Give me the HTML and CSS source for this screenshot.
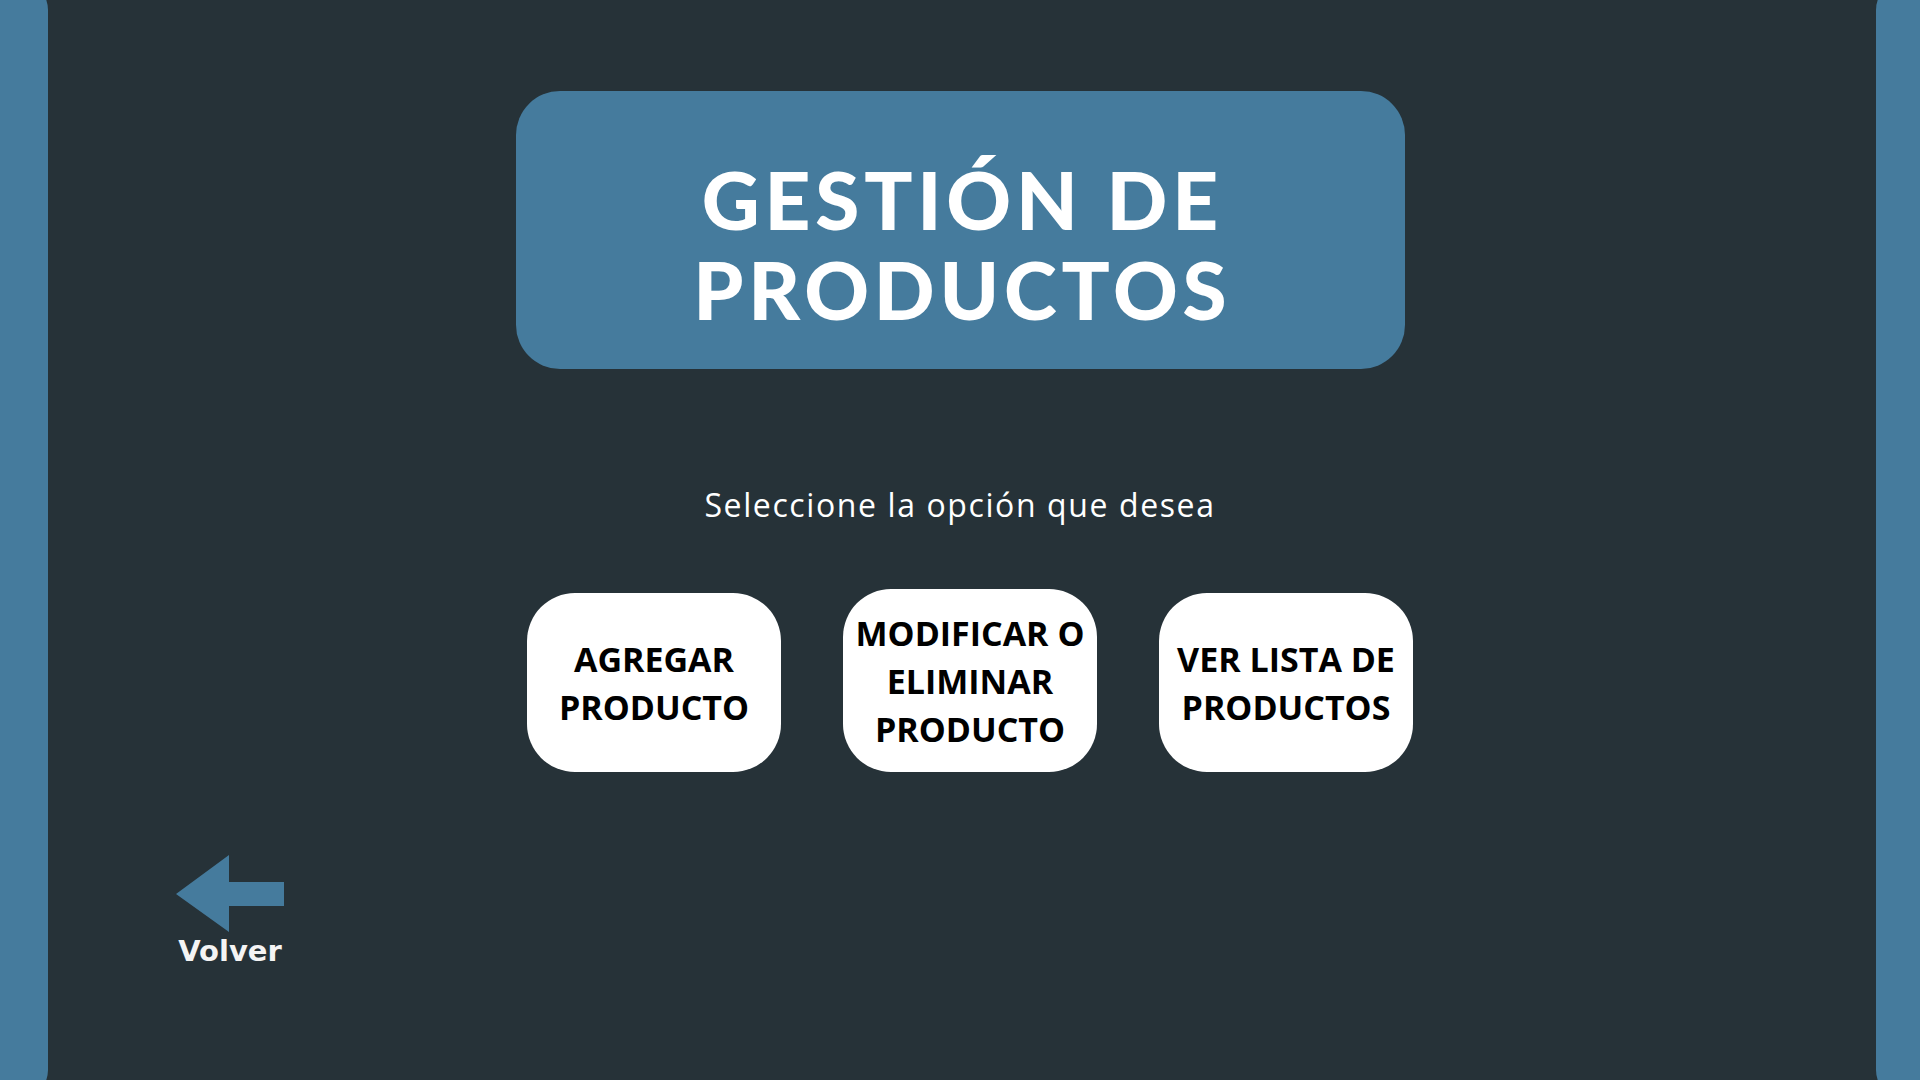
FILE: index.html
```html
<!DOCTYPE html>
<html lang="es">
<head>
<meta charset="utf-8">
<title>Gestión de productos</title>
<link rel="stylesheet" href="styles.css">
</head>
<body>
<div class="frame">
  <div class="band band-left"></div>
  <main class="main">
    <div class="title-box">
      <h1 class="title">GESTIÓN DE<br>PRODUCTOS</h1>
    </div>
    <p class="subtitle">Seleccione la opción que desea</p>
    <div class="options">
      <a class="option" href="#">AGREGAR<br>PRODUCTO</a>
      <a class="option option-tall" href="#">MODIFICAR O<br>ELIMINAR<br>PRODUCTO</a>
      <a class="option" href="#">VER LISTA DE<br>PRODUCTOS</a>
    </div>
    <a class="back" href="#">
      <svg class="back-arrow" width="108" height="77" viewBox="0 0 108 77"><polygon points="0,39 53,0 53,27 108,27 108,51 53,51 53,77" fill="#457b9d"/></svg>
      <span class="back-label">Volver</span>
    </a>
  </main>
  <div class="band band-right"></div>
</div>
</body>
</html>
```
FILE: styles.css
```css
html, body {
  margin: 0;
  padding: 0;
}
body {
  background: #263238;
  overflow: hidden;
}
.frame {
  display: flex;
  width: 1920px;
  height: 1080px;
}
.band {
  flex: none;
  background: #457b9d;
  margin: -20px 0;
}
.band-left {
  width: 48px;
  border-radius: 0 30px 30px 0;
}
.band-right {
  width: 44px;
  border-radius: 30px 0 0 30px;
}
.main {
  flex: 1;
  display: flex;
  flex-direction: column;
  align-items: center;
}
.title-box {
  margin-top: 91px;
  margin-left: -4px;
  width: 889px;
  height: 278px;
  box-sizing: border-box;
  padding-top: 63px;
  background: #457b9d;
  border-radius: 44px;
  text-align: center;
}
.title {
  margin: 0;
  font-family: "Lato", sans-serif;
  font-weight: 900;
  font-size: 80px;
  line-height: 90px;
  letter-spacing: 4.8px;
  padding-left: 4.8px;
  color: #ffffff;
}
.subtitle {
  margin: 115px 0 0 -4px;
  font-family: "Open Sans", sans-serif;
  font-weight: 400;
  font-size: 32px;
  line-height: 42px;
  letter-spacing: 1.6px;
  color: #ffffff;
}
.options {
  display: flex;
  align-items: flex-end;
  gap: 62px;
  margin-top: 63px;
  margin-left: 16px;
}
.option {
  width: 254px;
  height: 179px;
  display: flex;
  align-items: center;
  justify-content: center;
  text-align: center;
  background: #ffffff;
  border-radius: 48px;
  font-family: "Open Sans", sans-serif;
  font-weight: 700;
  font-size: 34px;
  line-height: 48px;
  color: #000000;
  text-decoration: none;
}
.option-tall {
  height: 183px;
}
.back {
  align-self: flex-start;
  margin-left: 128px;
  margin-top: 83px;
  display: flex;
  flex-direction: column;
  align-items: center;
  width: 108px;
  text-decoration: none;
}
.back-arrow {
  display: block;
}
.back-label {
  font-family: "DejaVu Sans", sans-serif;
  font-weight: 700;
  font-size: 29px;
  line-height: 34px;
  color: #f4f4f4;
  margin-top: 2px;
}
```
